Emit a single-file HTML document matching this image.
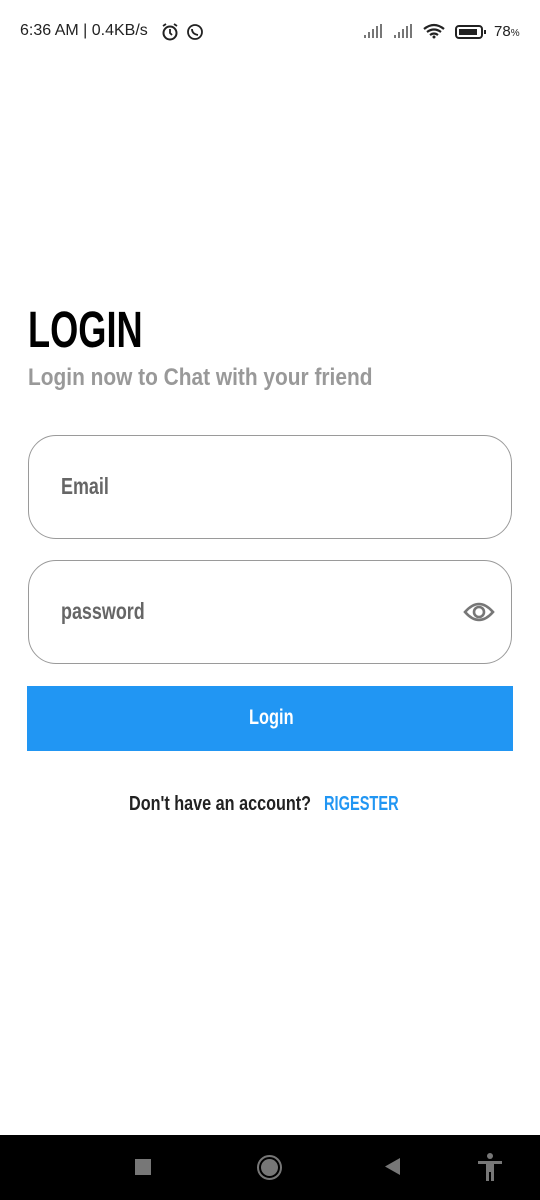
<!DOCTYPE html>
<html><head><meta charset="utf-8"><style>
*{margin:0;padding:0;box-sizing:border-box}
body{width:540px;height:1200px;background:#fff;position:relative;overflow:hidden;font-family:"Liberation Sans",sans-serif}
.n{display:inline-block;transform-origin:left center;white-space:nowrap;font-weight:bold}
.abs{position:absolute}
.box{position:absolute;left:28px;width:484px;height:104px;border:1.3px solid #9a9a9a;border-radius:28px}
</style></head><body>
<div class="abs" style="left:20px;top:22px;font-size:16px;color:#222">6:36 AM | 0.4KB/s</div>
<svg class="abs" style="left:160px;top:22px" width="46" height="20" viewBox="0 0 46 20">
<circle cx="10" cy="11" r="6.5" fill="none" stroke="#222" stroke-width="2"/><path d="M10 7v4l2 2M3 4l3-2M17 4l-3-2" stroke="#222" stroke-width="1.8" fill="none"/>
<circle cx="35" cy="10" r="7" fill="none" stroke="#222" stroke-width="1.8"/><path d="M32 7q0 5 6 6" stroke="#222" stroke-width="1.8" fill="none"/></svg>
<svg class="abs" style="left:362px;top:23px" width="130" height="18" viewBox="0 0 130 18">
<g fill="#777"><rect x="2" y="12" width="2" height="3"/><rect x="6" y="9" width="2" height="6"/><rect x="10" y="6" width="2" height="9"/><rect x="14" y="3" width="2" height="12"/><rect x="18" y="1" width="2" height="14"/>
<rect x="32" y="12" width="2" height="3"/><rect x="36" y="9" width="2" height="6"/><rect x="40" y="6" width="2" height="9"/><rect x="44" y="3" width="2" height="12"/><rect x="48" y="1" width="2" height="14"/></g>
<path d="M62 6q10-8 20 0M65 9q7-5 14 0M68 12q4-3 8 0" stroke="#222" stroke-width="2.2" fill="none"/><circle cx="72" cy="14" r="1.5" fill="#222"/>
<rect x="94" y="3" width="26" height="12" rx="3" fill="none" stroke="#222" stroke-width="2"/><rect x="97" y="6" width="18" height="6" fill="#222"/><rect x="122" y="7" width="2" height="4" fill="#222"/></svg>
<div class="abs" style="left:494px;top:23px;font-size:15px;color:#222">78<span style="font-size:10px">%</span></div>

<div class="abs" style="left:28px;top:300px;font-size:51px;color:#000"><span class="n" style="transform:scaleX(0.71)">LOGIN</span></div>
<div class="abs" style="left:28px;top:364px;font-size:24px;color:#999"><span class="n" style="transform:scaleX(0.87)">Login now to Chat with your friend</span></div>

<div class="box" style="top:435px"></div>
<div class="abs" style="left:61px;top:473px;font-size:23px;color:#666"><span class="n" style="transform:scaleX(0.78)">Email</span></div>
<div class="box" style="top:560px"></div>
<div class="abs" style="left:61px;top:598px;font-size:23px;color:#666"><span class="n" style="transform:scaleX(0.78)">password</span></div>
<svg class="abs" style="left:463px;top:600px" width="32" height="24" viewBox="0 0 32 24"><path d="M2 12Q16-4 30 12Q16 28 2 12Z" fill="none" stroke="#777" stroke-width="2.6"/><circle cx="16" cy="12" r="5" fill="none" stroke="#777" stroke-width="2.6"/></svg>

<div class="abs" style="left:27px;top:686px;width:486px;height:65px;background:#2196f3"></div>
<div class="abs" style="left:249px;top:706px;font-size:21px;color:#fff"><span class="n" style="transform:scaleX(0.78)">Login</span></div>
<div class="abs" style="left:129px;top:793px;font-size:20px;color:#222"><span class="n" style="transform:scaleX(0.81)">Don't have an account?</span></div>
<div class="abs" style="left:324px;top:793px;font-size:20px;color:#2196f3"><span class="n" style="transform:scaleX(0.73)">RIGESTER</span></div>

<div class="abs" style="left:0;top:1135px;width:540px;height:65px;background:#000"></div>
<div class="abs" style="left:135px;top:1159px;width:16px;height:16px;background:#777"></div>
<div class="abs" style="left:257px;top:1155px;width:25px;height:25px;border:2px solid #777;border-radius:50%"></div>
<div class="abs" style="left:261px;top:1159px;width:17px;height:17px;background:#777;border-radius:50%"></div>
<svg class="abs" style="left:385px;top:1158px" width="16" height="18"><path d="M15 0V17L0 8.5Z" fill="#777"/></svg>
<svg class="abs" style="left:477px;top:1152px" width="26" height="30" viewBox="0 0 26 30"><circle cx="13" cy="4" r="3" fill="#777"/><path d="M1 9H25V12H17V29H14V20H12V29H9V12H1Z" fill="#777"/></svg>
</body></html>
